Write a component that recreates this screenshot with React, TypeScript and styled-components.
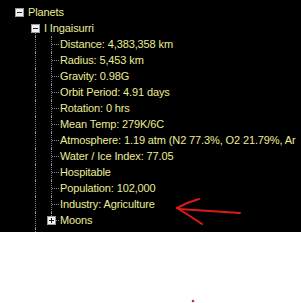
import styled, { createGlobalStyle } from 'styled-components';

const GlobalStyle = createGlobalStyle`
  html, body {
    margin: 0;
    padding: 0;
    background: #ffffff;
  }
  body {
    width: 301px;
    height: 303px;
    overflow: hidden;
  }
`;

const PageStyled = styled.div`
  position: relative;
  width: 301px;
  height: 303px;
  background: #ffffff;
`;

const TreePanel = styled.div`
  height: 232px;
  background: #000000;
  padding: 4px 0 0 11px;
  box-sizing: border-box;
  overflow: hidden;
`;

const RowStyled = styled.div`
  display: flex;
  align-items: stretch;
  height: 16px;
`;

type LineKind = 'empty' | 'pipe' | 'tee' | 'elbow' | 'start' | 'root';

const CellStyled = styled.div<{ $kind: LineKind }>`
  position: relative;
  flex: 0 0 16px;
  height: 16px;

  &::before {
    content: '';
    display: ${({ $kind }) => ($kind === 'empty' || $kind === 'root' ? 'none' : 'block')};
    position: absolute;
    left: 8px;
    top: ${({ $kind }) => ($kind === 'start' ? '8px' : '0')};
    height: ${({ $kind }) => ($kind === 'elbow' ? '8px' : $kind === 'start' ? '8px' : '16px')};
    border-left: 1px dotted #8a8a8a;
  }

  &::after {
    content: '';
    display: ${({ $kind }) => ($kind === 'tee' || $kind === 'elbow' ? 'block' : 'none')};
    position: absolute;
    left: 9px;
    top: 8px;
    width: 7px;
    border-top: 1px dotted #8a8a8a;
  }
`;

const ExpandBox = styled.span<{ $open: boolean }>`
  position: absolute;
  z-index: 1;
  left: 4px;
  top: 4px;
  width: 9px;
  height: 9px;
  box-sizing: border-box;
  border: 1px solid #9a9a9a;
  background: #f2f2f2;

  &::before,
  &::after {
    content: '';
    position: absolute;
    background: #202020;
  }
  &::before {
    left: 1px;
    top: 3px;
    width: 5px;
    height: 1px;
  }
  &::after {
    display: ${({ $open }) => ($open ? 'none' : 'block')};
    left: 3px;
    top: 1px;
    width: 1px;
    height: 5px;
  }
`;

const Label = styled.span`
  padding-left: 1px;
  font-family: 'Liberation Sans', Arial, sans-serif;
  font-size: 11px;
  letter-spacing: -0.12px;
  line-height: 16px;
  color: #ecec94;
  white-space: nowrap;
`;

const ArrowLayer = styled.svg`
  position: absolute;
  left: 0;
  top: 0;
  width: 301px;
  height: 303px;
  pointer-events: none;
`;

type Node = {
  guides: LineKind[];
  box?: 'open' | 'closed';
  label: string;
};

const stats = [
  'Distance: 4,383,358 km',
  'Radius: 5,453 km',
  'Gravity: 0.98G',
  'Orbit Period: 4.91 days',
  'Rotation: 0 hrs',
  'Mean Temp: 279K/6C',
  'Atmosphere: 1.19 atm (N2 77.3%, O2 21.79%, Ar',
  'Water / Ice Index: 77.05',
  'Hospitable',
  'Population: 102,000',
  'Industry: Agriculture',
];

const rows: Node[] = [
  { guides: ['root'], box: 'open', label: 'Planets' },
  { guides: ['empty', 'start'], box: 'open', label: 'I Ingaisurri' },
  ...stats.map((label) => ({ guides: ['empty', 'pipe', 'tee'] as LineKind[], label })),
  { guides: ['empty', 'pipe', 'elbow'], box: 'closed', label: 'Moons' },
  { guides: ['empty', 'pipe'], label: '' },
];

const TreeRow = ({ node }: { node: Node }) => {
  const last = node.guides.length - 1;
  return (
    <RowStyled>
      {node.guides.map((kind, i) => (
        <CellStyled key={i} $kind={kind}>
          {i === last && node.box && <ExpandBox $open={node.box === 'open'} />}
        </CellStyled>
      ))}
      {node.label && <Label>{node.label}</Label>}
    </RowStyled>
  );
};

const App = () => {
  return (
    <PageStyled>
      <GlobalStyle />
      <TreePanel>
        {rows.map((node, i) => (
          <TreeRow key={i} node={node} />
        ))}
      </TreePanel>
      <ArrowLayer viewBox="0 0 301 303">
        <g fill="none" stroke="#dd1a1a" strokeWidth="2" strokeLinecap="round">
          <path d="M199 199 Q188 202 177 208" />
          <path d="M177 208 Q190 216 202 224" />
          <path d="M179 209 Q210 211 240 213" />
        </g>
        <circle cx="193" cy="301" r="1.3" fill="#c83030" />
      </ArrowLayer>
    </PageStyled>
  );
};

export default App;
